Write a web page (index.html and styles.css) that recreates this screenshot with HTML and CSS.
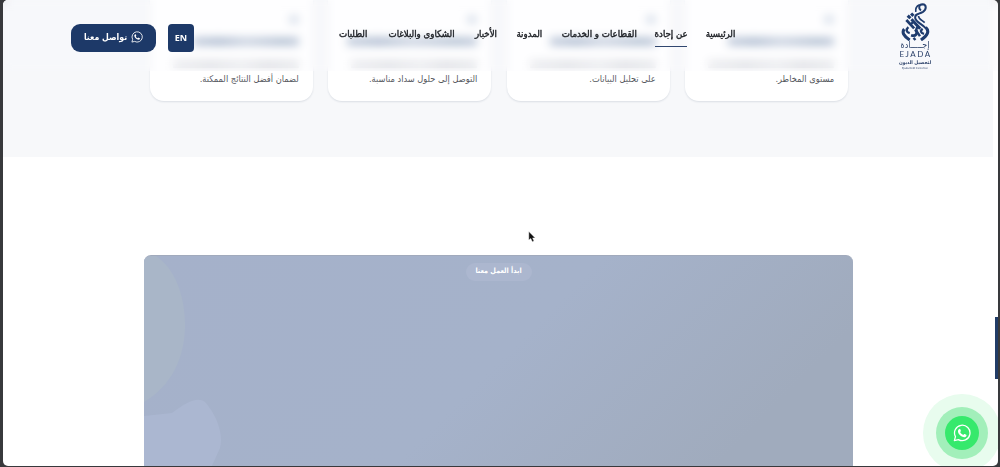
FILE: index.html
```html
<!DOCTYPE html>
<html lang="ar" dir="rtl">
<head>
  <meta charset="UTF-8">
  <meta name="viewport" content="width=device-width, initial-scale=1">
  <title>إجادة لتحصيل الديون</title>
  <link rel="stylesheet" href="styles.css">
</head>
<body>
  <svg class="defs" width="0" height="0">
    <symbol id="whatsapp" viewBox="0 0 24 24">
      <path fill="none" stroke="currentColor" stroke-width="1.7" stroke-linejoin="round" d="M1.8 22.2l1.5-5.4A10.3 10.3 0 1 1 7.2 20.8z"/>
      <path fill="currentColor" d="M8.7 6.5c.5-.1.8.1 1 .6l.8 1.9c.1.4 0 .7-.3 1l-.7.8c.9 1.8 2.2 3 4.1 3.9l1-1.2c.3-.3.5-.4.9-.2l2.1 1c.4.2.5.4.4.9-.2 1.5-1.4 2.4-2.9 2.4-4.3-.2-8.5-4.5-8.5-7.9 0-1.5.9-2.9 2.1-3.2z"/>
    </symbol>
  </svg>
  <div class="window">
    <header class="header">
      <a class="logo" href="#">
        <svg class="logo-mark" viewBox="63 8 84 112" fill="none" stroke="#1f3c6e" stroke-linecap="butt">
          <path stroke-width="6" d="M121 30C113 24 114 12 126 12C138 13 138 27 127 34C113 42 103 40 104 52C105 64 122 68 135 82"/>
          <path stroke-width="5" d="M106 34C104 24 110 16 117 13M114 46C114 55 126 60 132 66"/>
          <path stroke-width="9" d="M82 45L90 53M93 56L119 84M92 39L99 46"/>
          <path stroke-width="8" d="M78 58L101 83M104 86C114 97 106 108 92 103"/>
          <path stroke-width="9" d="M72 85C64 94 70 106 88 117M135 80C147 91 141 103 121 117"/>
          <path stroke-width="7" d="M112 78C101 88 113 96 118 106M126 84C118 90 120 96 130 99M84 79C76 86 78 94 88 97"/>
          <path stroke-width="7" d="M99 111L105 117M98 64L90 72"/>
        </svg>
        <span class="logo-ar">إجـــــادة</span>
        <span class="logo-en">EJADA</span>
        <span class="logo-sub">لتحصيل الديون</span>
        <span class="logo-tag">Ejada Debt Collection</span>
      </a>
      <nav class="nav">
        <a href="#">الرئيسية</a>
        <a class="active" href="#">عن إجادة</a>
        <a href="#">القطاعات و الخدمات</a>
        <a href="#">المدونة</a>
        <a href="#">الأخبار</a>
        <a href="#">الشكاوى والبلاغات</a>
        <a href="#">الطلبات</a>
      </nav>
      <div class="actions">
        <a class="lang" href="#">EN</a>
        <a class="contact" href="#"><svg width="12" height="12"><use href="#whatsapp"/></svg><span>تواصل معنا</span></a>
      </div>
    </header>

    <section class="steps">
      <article class="card">
        <i class="dot"></i><i class="line title"></i><i class="line"></i>
        <p>مستوى المخاطر.</p>
      </article>
      <article class="card">
        <i class="dot"></i><i class="line title"></i><i class="line"></i>
        <p>على تحليل البيانات.</p>
      </article>
      <article class="card">
        <i class="dot"></i><i class="line title wide"></i><i class="line"></i>
        <p>التوصل إلى حلول سداد مناسبة.</p>
      </article>
      <article class="card">
        <i class="dot"></i><i class="line title"></i><i class="line"></i>
        <p>لضمان أفضل النتائج الممكنة.</p>
      </article>
    </section>

    <section class="cta">
      <svg class="shapes" width="90" height="212" viewBox="0 0 90 212">
        <path fill="#a9b6c8" d="M0 0H12C30 12 41 38 41 70C41 100 28 130 0 146z"/>
        <path fill="#abb7d1" d="M0 160L28 157C42 146 54 140 61 146C72 158 80 178 76 192L67 212H0z"/>
      </svg>
      <span class="badge">ابدأ العمل معنا</span>
    </section>

    <div class="side-tab"></div>
    <a class="float" href="#"><svg width="18" height="18"><use href="#whatsapp"/></svg></a>
  </div>
  <svg class="cursor" width="8" height="12" viewBox="0 0 8 12"><path d="M.8.5V9L2.8 7.5L4.3 10.8L6 10L4.6 6.9H7.2z" fill="#111" stroke="#fff" stroke-width=".4"/></svg>
</body>
</html>
```
FILE: styles.css
```css
* { box-sizing: border-box; }
body { margin: 0; height: 467px; padding: 0 2px 1px 3px; background: #38393c; overflow: hidden; font-family: "DejaVu Sans Condensed", "DejaVu Sans", sans-serif; color: #1d2025; }
a { color: inherit; text-decoration: none; }
.defs { position: absolute; }
.window { position: relative; height: 466px; background: #fff; border-radius: 5px; overflow: hidden; }

.header { position: absolute; z-index: 2; top: 0; left: 0; right: 0; height: 71px; padding: 0 67px 0 68px; display: flex; align-items: flex-start; backdrop-filter: blur(4px); background: rgba(250, 251, 253, 0.2); }
.logo { width: 32px; padding-top: 3px; display: flex; flex-direction: column; align-items: center; color: #293f68; white-space: nowrap; }
.logo-mark { width: 29px; height: 38px; }
.logo-ar { font-size: 8.8px; line-height: 9px; }
.logo-en { font: 8px/9px Lato, sans-serif; letter-spacing: 1.5px; direction: ltr; margin-right: -1px; }
.logo-sub { font-size: 4.9px; line-height: 6px; font-weight: bold; }
.logo-tag { font-size: 2.7px; line-height: 4px; direction: ltr; margin-top: 1px; }

.nav { display: grid; grid-template-columns: 30px 32px 75px 28px 22px 70px 30px; column-gap: 18.4px; margin-right: 163.5px; padding-top: 25px; font-size: 9.6px; line-height: 18px; -webkit-text-stroke: 0.4px; }
.nav a { display: flex; justify-content: center; height: 22px; white-space: nowrap; }
.nav .active { border-bottom: 1px solid #30466f; }

.actions { display: flex; gap: 12px; margin-right: auto; padding-top: 24px; }
.lang, .contact { display: flex; align-items: center; justify-content: center; height: 28px; background: #1d3968; color: #fff; font-size: 8.7px; font-weight: bold; white-space: nowrap; padding-bottom: 2px; }
.lang { width: 26px; border-radius: 4px; font-family: "Open Sans", sans-serif; font-size: 9px; }
.contact { width: 85px; border-radius: 9px; gap: 4px; }

.steps { height: 157px; margin: 0 5px 0 0; padding-right: 3px; padding-left: 5px; background: #f7f8fa; display: flex; justify-content: center; gap: 15.5px; }
.card { width: 163px; height: 101px; padding: 15px 14px 0; background: #fff; border-radius: 0 0 14px 14px; box-shadow: 0 1px 2px rgba(20, 40, 70, 0.12); }
.card i { display: block; }
.dot { width: 10px; height: 9px; background: #d3dce8; border-radius: 4px; }
.line { width: 126px; height: 8px; margin-top: 14px; background: linear-gradient(90deg, #e8e9ec, #dcdee2 30%, #e8e9ec 55%, #dadce0 75%, #e4e6e9); }
.line.title { width: 106px; height: 9px; margin-top: 13px; background: linear-gradient(90deg, #b9c5d7, #a5b4ca 25%, #c3cddc 50%, #a9b8cc 85%, #b9c5d7); }
.line.title.wide { width: 130px; }
.card p { margin: 4px 0 0; font-size: 9.2px; line-height: 13px; color: #55585e; white-space: nowrap; }

.cta { position: relative; width: 709px; height: 212px; margin: 98px 145px 0 0; border-radius: 7px 7px 0 0; background: linear-gradient(135deg, #a5b1ca 0%, #a5b2ca 50%, #a0abbd 85%); text-align: center; overflow: hidden; border-top: 1px solid #a1aabc; }
.shapes { position: absolute; left: 0; top: 0; }
.badge { display: inline-block; margin-top: 7px; width: 66px; height: 18px; border-radius: 9px; background: #acb7cf; color: #fff; font-size: 7.2px; font-weight: bold; line-height: 16px; white-space: nowrap; vertical-align: top; }

.side-tab { position: absolute; right: 0; top: 317px; width: 3px; height: 62px; background: #213c67; }
.float { position: absolute; left: 942px; top: 416px; width: 34px; height: 34px; border-radius: 50%; background: #36e96c; color: #fff; display: flex; align-items: center; justify-content: center; box-shadow: 0 0 0 9px #a2efba, 0 0 0 22px #e8fcee; }
.cursor { position: absolute; left: 528px; top: 231px; }
```
